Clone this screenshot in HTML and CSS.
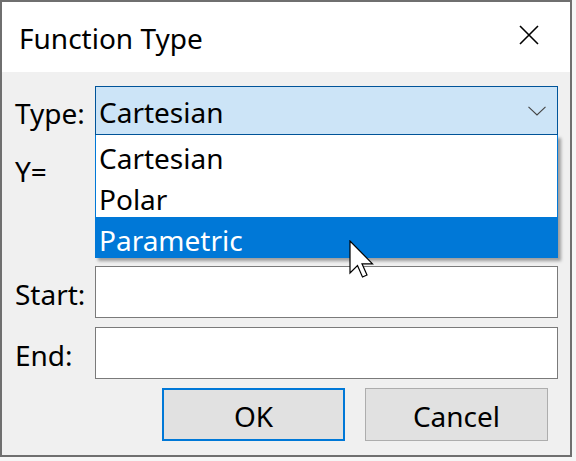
FILE: index.html
```html
<!DOCTYPE html>
<html>
<head>
<meta charset="utf-8">
<link rel="stylesheet" href="styles.css">
</head>
<body>
<div class="window">
  <div class="titlebar">
    <span class="title">Function Type</span>
    <svg class="close" width="20" height="20" viewBox="0 0 20 20"><path d="M1 1 L19 19 M19 1 L1 19" stroke="#000" stroke-width="1.6" fill="none"/></svg>
  </div>
  <div class="content">
    <div class="form">
      <div class="label">Type:</div>
      <div class="combo">
        <span class="combo-text">Cartesian</span>
        <svg class="chevron" width="18" height="10" viewBox="0 0 18 10"><path d="M0.5 0.8 L9 9 L17.5 0.8" stroke="#444" stroke-width="1.1" fill="none"/></svg>
        <ul class="dropdown">
          <li class="item">Cartesian</li>
          <li class="item">Polar</li>
          <li class="item selected">Parametric</li>
        </ul>
      </div>
      <div class="label label-top">Y=</div>
      <div class="field field-tall"></div>
      <div class="label">Start:</div>
      <div class="field"></div>
      <div class="label">End:</div>
      <div class="field"></div>
    </div>
    <div class="buttons">
      <div class="btn btn-default">OK</div>
      <div class="btn">Cancel</div>
    </div>
  </div>
  <svg class="cursor" width="26" height="40" viewBox="0 0 26 40"><path d="M1 1 L1 33 L8.5 25.5 L13.5 37 L18 35 L13 23.8 L23.5 23.8 Z" fill="#fff" stroke="#000" stroke-width="1.2" stroke-linejoin="miter"/></svg>
</div>
</body>
</html>
```

FILE: styles.css
```css
html, body {
  margin: 0;
  padding: 0;
}
body {
  background: #f6f6f6;
  width: 576px;
  height: 461px;
  font-family: "Noto Sans", "Open Sans", sans-serif;
  font-size: 28px;
  color: #000;
}
.window {
  position: relative;
  box-sizing: border-box;
  width: 572px;
  height: 457px;
  border: 2px solid #6f6f6f;
  background: #f0f0f0;
  display: flex;
  flex-direction: column;
}
.titlebar {
  height: 70px;
  background: #fff;
  display: flex;
  align-items: center;
  justify-content: space-between;
  padding: 0 31px 0 17px;
}
.title {
  line-height: 1;
  padding-top: 1px;
}
.close {
  display: block;
  margin-top: -4px;
}
.content {
  flex: 1;
  padding: 14px 12px 13px 13px;
  display: flex;
  flex-direction: column;
}
.form {
  display: grid;
  grid-template-columns: 80px 463px;
  grid-template-rows: 49px 113px 52px 52px;
  row-gap: 9px;
}
.label {
  display: flex;
  align-items: center;
  line-height: 1;
  padding-top: 4px;
  box-sizing: border-box;
}
.label-top {
  align-self: start;
  height: 49px;
}
.combo {
  position: relative;
  box-sizing: border-box;
  border: 1px solid #005499;
  background: #cce4f7;
  display: flex;
  align-items: center;
  justify-content: space-between;
  padding: 3px 11px 0 3px;
}
.combo-text {
  line-height: 1;
}
.chevron {
  display: block;
  margin-top: -3px;
}
.dropdown {
  position: absolute;
  left: -1px;
  right: -1px;
  top: 48px;
  margin: 0;
  padding: 0;
  list-style: none;
  background: #fff;
  border-left: 1px solid #0078d7;
  border-right: 1px solid #0078d7;
  box-shadow: 3px 3px 3px rgba(0, 0, 0, 0.35);
  z-index: 2;
}
.item {
  height: 41px;
  display: flex;
  align-items: center;
  padding: 4px 0 0 3px;
  box-sizing: border-box;
  line-height: 1;
}
.selected {
  background: #0078d7;
  color: #fff;
}
.field {
  box-sizing: border-box;
  border: 1px solid #7a7a7a;
  background: #fff;
}
.buttons {
  display: flex;
  justify-content: flex-end;
  gap: 20px;
  margin-top: 9px;
  padding-right: 10px;
}
.btn {
  box-sizing: border-box;
  width: 183px;
  height: 53px;
  background: #e1e1e1;
  border: 1px solid #adadad;
  display: flex;
  align-items: center;
  justify-content: center;
  line-height: 1;
  padding-top: 3px;
}
.btn-default {
  border: 2px solid #0078d7;
}
.cursor {
  position: absolute;
  left: 347px;
  top: 238px;
  z-index: 5;
}
```
